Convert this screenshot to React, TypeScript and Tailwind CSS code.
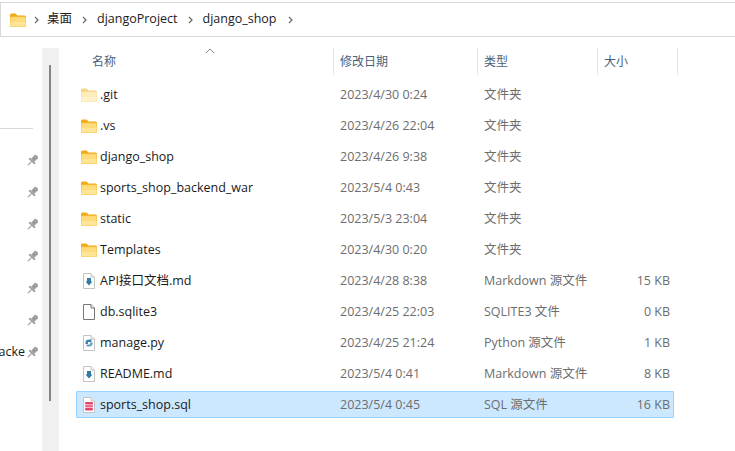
const FONT = "font-['Open_Sans','Noto_Sans_CJK_SC',sans-serif]";

type Row = { name: string; date: string; type: string; size?: string; icon: string; selected?: boolean };

const rows: Row[] = [
  { name: '.git', date: '2023/4/30 0:24', type: '文件夹', icon: 'hidden' },
  { name: '.vs', date: '2023/4/26 22:04', type: '文件夹', icon: 'folder' },
  { name: 'django_shop', date: '2023/4/26 9:38', type: '文件夹', icon: 'folder' },
  { name: 'sports_shop_backend_war', date: '2023/5/4 0:43', type: '文件夹', icon: 'folder' },
  { name: 'static', date: '2023/5/3 23:04', type: '文件夹', icon: 'folder' },
  { name: 'Templates', date: '2023/4/30 0:20', type: '文件夹', icon: 'folder' },
  { name: 'API接口文档.md', date: '2023/4/28 8:38', type: 'Markdown 源文件', size: '15 KB', icon: 'md' },
  { name: 'db.sqlite3', date: '2023/4/25 22:03', type: 'SQLITE3 文件', size: '0 KB', icon: 'blank' },
  { name: 'manage.py', date: '2023/4/25 21:24', type: 'Python 源文件', size: '1 KB', icon: 'py' },
  { name: 'README.md', date: '2023/5/4 0:41', type: 'Markdown 源文件', size: '8 KB', icon: 'md' },
  { name: 'sports_shop.sql', date: '2023/5/4 0:45', type: 'SQL 源文件', size: '16 KB', icon: 'sql', selected: true },
];

function Folder({ faded }: { faded?: boolean }) {
  return (
    <svg width="16" height="14" viewBox="0 0 16 14" className={faded ? 'opacity-50' : ''}>
      <path d="M0 2 Q0 0.5 1.5 0.5 H5.5 L7.5 2.5 H14.5 Q16 2.5 16 4 V5 H0 Z" fill="#f0ac12" />
      <rect x="0" y="3.5" width="16" height="10.5" rx="1" fill="#f5c04a" />
      <rect x="0.6" y="4.2" width="14.8" height="9.2" fill="#fedc7c" />
      <rect x="0.6" y="9" width="14.8" height="4.4" fill="#ffe596" />
    </svg>
  );
}

function FileIcon({ kind }: { kind: string }) {
  const line = kind === 'blank' ? '#767676' : '#c4c4c4';
  return (
    <svg width="12" height="16" viewBox="0 0 12 16">
      <path d="M0.5 0.5 H8 L11.5 4 V15.5 H0.5 Z" fill="#fff" stroke={line} />
      <path d="M8 0.5 V4 H11.5" fill="#f2f2f2" stroke={line} />
      {kind === 'md' && <path d="M4 5 H8 V8.5 H9.5 L6 12.5 L2.5 8.5 H4 Z" fill="#2f7d9f" />}
      {kind === 'py' && (
        <>
          <path d="M2.5 7.5 Q2.5 4.5 6 4.5 H8.5 V7 H5 V9 H2.5 Z" fill="#3d84b5" />
          <path d="M9.5 8.5 Q9.5 11.5 6 11.5 H3.5 V9.5 H7 V7.5 H9.5 Z" fill="#5fa0c4" />
        </>
      )}
      {kind === 'sql' && (
        <>
          <rect x="2" y="5" width="8" height="2.4" rx="1" fill="#e2466f" />
          <rect x="2" y="8" width="8" height="2.4" rx="1" fill="#ea6a8d" />
          <rect x="2" y="11" width="8" height="2.4" rx="1" fill="#e2466f" />
        </>
      )}
    </svg>
  );
}

function Pin() {
  return (
    <svg width="11" height="11" viewBox="0 0 11 11" className="shrink-0">
      <g transform="rotate(45 5.5 5.5)" fill="#9c9c9c">
        <rect x="2.6" y="-1" width="5.8" height="1.8" />
        <rect x="3.3" y="0.8" width="4.4" height="4.4" />
        <rect x="1.5" y="5.2" width="8" height="1.8" />
        <rect x="4.9" y="7" width="1.2" height="5" />
      </g>
    </svg>
  );
}

function Chevron() {
  return (
    <svg width="5" height="8" viewBox="0 0 5 8">
      <path d="M1 1 L4 4 L1 7" fill="none" stroke="#6d6d6d" strokeWidth="1.3" />
    </svg>
  );
}

function HeaderCell({ label, className }: { label: string; className: string }) {
  return (
    <div className={`flex h-[27px] items-center border-r border-[#e5e5e5] text-[12px] text-[#4c607a] ${className}`}>
      {label}
    </div>
  );
}

export default function App() {
  return (
    <div className={`h-[451px] w-[735px] overflow-hidden bg-white ${FONT}`}>
      {/* address bar */}
      <div className="mt-[2px] flex h-[35px] items-center border-y border-l border-[#d9d9d9] pl-[9px] text-[12.5px] text-[#1a1a1a]">
        <Folder />
        <span className="ml-[8px] mr-[8px]"><Chevron /></span>
        <span>桌面</span>
        <span className="mx-[10px]"><Chevron /></span>
        <span>djangoProject</span>
        <span className="mx-[10px]"><Chevron /></span>
        <span>django_shop</span>
        <span className="mx-[11px]"><Chevron /></span>
      </div>

      <div className="mt-[11px] flex h-[403px]">
        {/* nav pane, mostly scrolled away */}
        <div className="w-[42px] shrink-0 overflow-hidden">
          <div className="mt-[80px] h-px w-[33px] bg-[#d9d9d9]" />
          <div className="mt-[26px] flex flex-col items-end gap-[21px] pr-[4px]">
            {[0, 1, 2, 3, 4, 5].map(i => (
              <Pin key={i} />
            ))}
          </div>
          <div className="mt-[18px] flex h-[16px] items-center justify-end pr-[4px]">
            <span className="mr-[2px] w-[26px] overflow-hidden text-[12.5px] leading-[16px] text-[#1a1a1a] [direction:rtl]">backe</span>
            <Pin />
          </div>
        </div>

        {/* nav scrollbar */}
        <div className="w-[16px] shrink-0 bg-[#f0f0f0] pl-[7px] pt-[17px]">
          <div className="h-[336px] w-[2px] bg-[#858585]" />
        </div>
        <div className="w-px shrink-0 bg-[#f2f2f2]" />

        {/* file list */}
        <div className="relative ml-[17px] w-[602px]">
          <svg width="10" height="6" viewBox="0 0 10 6" className="absolute left-[129px] top-0">
            <path d="M1 5 L5 1 L9 5" fill="none" stroke="#8a8a8a" />
          </svg>
          <div className="flex">
            <HeaderCell label="名称" className="w-[258px] pl-[16px]" />
            <HeaderCell label="修改日期" className="w-[144px] pl-[6px]" />
            <HeaderCell label="类型" className="w-[120px] pl-[6px]" />
            <HeaderCell label="大小" className="w-[80px] pl-[6px]" />
          </div>
          <div className="mt-[6px] flex flex-col gap-[4px]">
            {rows.map(r => (
              <div
                key={r.name}
                className={`flex h-[27px] w-[598px] items-center border text-[12.5px] ${
                  r.selected ? 'rounded-[1px] border-[#99d1ff] bg-[#cce8ff]' : 'border-transparent'
                }`}
              >
                <div className="flex w-[263px] items-center text-[#1a1a1a]">
                  <div className="flex w-[23px] justify-center pl-px">
                    {r.icon === 'folder' || r.icon === 'hidden' ? <Folder faded={r.icon === 'hidden'} /> : <FileIcon kind={r.icon} />}
                  </div>
                  <span className="pt-[2px] text-[12.5px]">{r.name}</span>
                </div>
                <div className="w-[144px] pt-[2px] text-[#6d6d6d]">{r.date}</div>
                <div className="w-[120px] pt-[2px] text-[#6d6d6d]">{r.type}</div>
                <div className="w-[66px] pt-[2px] text-right text-[#6d6d6d]">{r.size}</div>
              </div>
            ))}
          </div>
        </div>
      </div>
    </div>
  );
}
